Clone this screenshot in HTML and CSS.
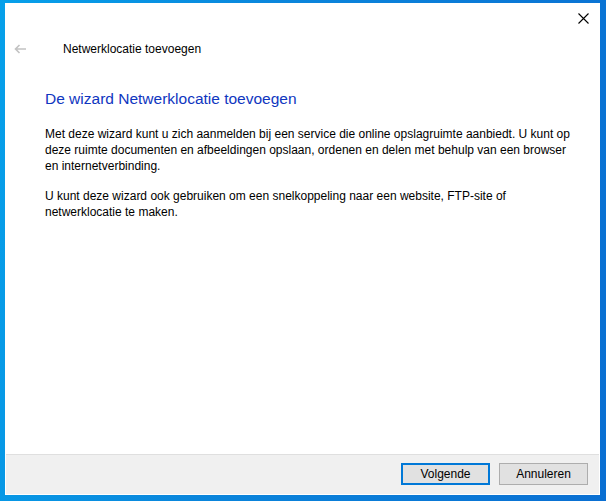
FILE: index.html
```html
<!DOCTYPE html>
<html lang="nl">
<head>
    <meta charset="UTF-8">
    <title>Netwerklocatie toevoegen</title>
    <link rel="stylesheet" href="styles.css">
</head>
<body>
    <div class="window">
        <div class="titlebar">
            <button class="close-btn" aria-label="Sluiten">
                <svg width="11" height="11" viewBox="0 0 11 11">
                    <path d="M0.5 0.5L10.5 10.5M10.5 0.5L0.5 10.5" stroke="#000" stroke-width="1.1" fill="none" />
                </svg>
            </button>
        </div>

        <div class="nav">
            <svg class="back" width="12" height="10" viewBox="0 0 12 10">
                <path d="M12 5H1.5M5.5 1L1.5 5l4 4" stroke="#c2c2c2" stroke-width="1.6" fill="none" />
            </svg>
            <span class="nav-title">Netwerklocatie toevoegen</span>
        </div>

        <div class="content">
            <h1 class="heading">De wizard Netwerklocatie toevoegen</h1>
            <p class="text">Met deze wizard kunt u zich aanmelden bij een service die online opslagruimte aanbiedt. U kunt op<br>deze ruimte documenten en afbeeldingen opslaan, ordenen en delen met behulp van een browser<br>en internetverbinding.</p>
            <p class="text">U kunt deze wizard ook gebruiken om een snelkoppeling naar een website, FTP-site of<br>netwerklocatie te maken.</p>
        </div>

        <div class="footer">
            <button class="btn btn-default">Volgende</button>
            <button class="btn">Annuleren</button>
        </div>
    </div>
</body>
</html>
```

FILE: styles.css
```css
body {
    margin: 0;
    height: 501px;
    overflow: hidden;
    font-family: "Liberation Sans", Arial, sans-serif;
    background: linear-gradient(100deg, #06a0ea 0%, #0a86dc 40%, #0a6fd2 100%);
}

.window {
    box-sizing: border-box;
    margin: 3px 0 0 5px;
    width: 595px;
    height: 492px;
    padding: 0 1px 1px 1px;
    background-color: #fff;
    display: flex;
    flex-direction: column;
}

.titlebar {
    height: 30px;
    display: flex;
    justify-content: flex-end;
}

.close-btn {
    width: 32px;
    height: 30px;
    border: none;
    padding: 0;
    background: transparent;
    display: flex;
    align-items: center;
    justify-content: center;
}

.nav {
    height: 32px;
    display: flex;
    align-items: center;
    padding-left: 8px;
}

.back {
    margin-right: 37px;
}

.nav-title {
    font-size: 12px;
    color: #000;
}

.content {
    flex: 1;
    padding: 24px 0 0 39px;
}

.heading {
    margin: 0;
    font-size: 15.5px;
    line-height: 20px;
    font-weight: normal;
    color: #0f36c0;
}

.text {
    margin: 17px 0 0 0;
    font-size: 12px;
    line-height: 16px;
    color: #000;
    white-space: nowrap;
}

.text + .text {
    margin-top: 14px;
}

.footer {
    box-sizing: border-box;
    height: 40px;
    border-top: 1px solid #dfdfdf;
    background-color: #f0f0f0;
    display: flex;
    justify-content: flex-end;
    align-items: flex-start;
    gap: 9px;
    padding: 8px 11px 0 0;
}

.btn {
    box-sizing: border-box;
    width: 89px;
    height: 22px;
    border: 1px solid #adadad;
    background-color: #e1e1e1;
    font-family: "Liberation Sans", Arial, sans-serif;
    font-size: 12px;
    color: #000;
    padding: 0;
}

.btn-default {
    border: 2px solid #0078d7;
}
```
